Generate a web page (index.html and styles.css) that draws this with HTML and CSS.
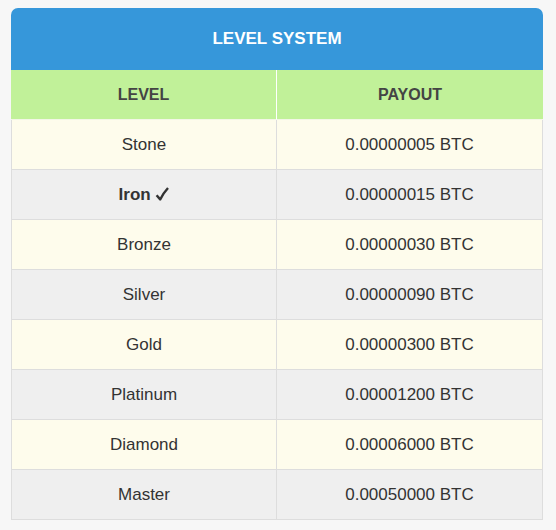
FILE: index.html
```html
<!DOCTYPE html>
<html>
<head>
<meta charset="utf-8">
<link rel="stylesheet" href="styles.css">
</head>
<body>
<div class="card">
  <div class="title">LEVEL SYSTEM</div>
  <table class="levels">
    <thead>
      <tr><th>LEVEL</th><th>PAYOUT</th></tr>
    </thead>
    <tbody>
      <tr class="odd"><td>Stone</td><td>0.00000005 BTC</td></tr>
      <tr class="even"><td><b>Iron</b> <svg class="check" width="14" height="14" viewBox="0 0 14 14"><path d="M1.6 8.2 L5.2 12.4 Q8 6.5 13 1" fill="none" stroke="#333" stroke-width="2.4" stroke-linejoin="round"/></svg></td><td>0.00000015 BTC</td></tr>
      <tr class="odd"><td>Bronze</td><td>0.00000030 BTC</td></tr>
      <tr class="even"><td>Silver</td><td>0.00000090 BTC</td></tr>
      <tr class="odd"><td>Gold</td><td>0.00000300 BTC</td></tr>
      <tr class="even"><td>Platinum</td><td>0.00001200 BTC</td></tr>
      <tr class="odd"><td>Diamond</td><td>0.00006000 BTC</td></tr>
      <tr class="even"><td>Master</td><td>0.00050000 BTC</td></tr>
    </tbody>
  </table>
</div>
</body>
</html>
```
FILE: styles.css
```css
html, body {
  margin: 0;
  padding: 0;
  background: #f7f7f7;
}
body {
  padding: 8px 13px 0 11px;
  font-family: "Liberation Sans", Arial, sans-serif;
}
.card {
  width: 532px;
}
.title {
  background: #3697da;
  color: #fff;
  font-weight: bold;
  font-size: 17px;
  text-align: center;
  height: 62px;
  line-height: 62px;
  border-radius: 7px 7px 0 0;
}
.levels {
  width: 532px;
  border-collapse: separate;
  border-spacing: 0;
  table-layout: fixed;
}
.levels th {
  background: #c1f199;
  color: #444;
  font-size: 16px;
  font-weight: bold;
  height: 49px;
  line-height: 49px;
  padding: 0;
  text-align: center;
  border-bottom: 1px solid #f3f6e6;
}
.levels th:first-child {
  border-right: 1px solid #fff;
}
.levels td {
  font-size: 17px;
  color: #333;
  text-align: center;
  padding: 0;
  line-height: 49px;
  height: 49px;
  border-bottom: 1px solid #ddd;
}
.levels td:first-child {
  border-left: 1px solid #ddd;
  border-right: 1px solid #ddd;
}
.levels td:last-child {
  border-right: 1px solid #ddd;
}
.levels tr.odd td {
  background: #fefcec;
}
.levels tr.even td {
  background: #efefef;
}
.levels b {
  font-weight: bold;
  color: #333;
}
.check {
  vertical-align: -1px;
}
```
